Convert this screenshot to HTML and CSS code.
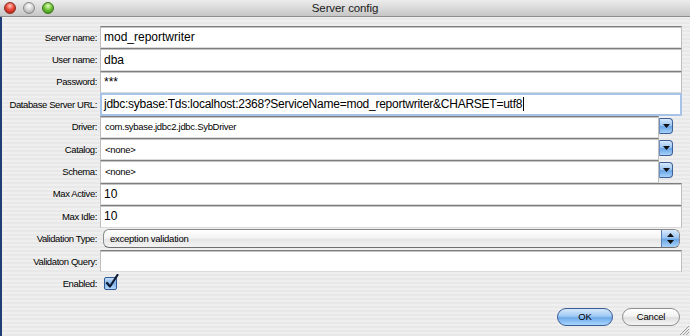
FILE: index.html
```html
<!DOCTYPE html>
<html>
<head>
<meta charset="utf-8">
<title>Server config</title>
<link rel="stylesheet" href="styles.css">
</head>
<body>
<div class="window">
  <div class="titlebar">
    <div class="lights">
      <span class="light red"></span>
      <span class="light gray"></span>
      <span class="light green"></span>
    </div>
    <div class="title">Server config</div>
    <div></div>
  </div>
  <div class="content">
    <div class="form">
      <div class="lbl">Server name:</div>
      <div class="field big">mod_reportwriter</div>

      <div class="lbl">User name:</div>
      <div class="field big">dba</div>

      <div class="lbl">Password:</div>
      <div class="field pw">***</div>

      <div class="lbl">Database Server URL:</div>
      <div class="field big focus">jdbc:sybase:Tds:localhost:2368?ServiceName=mod_reportwriter&amp;CHARSET=utf8<span class="caret"></span></div>

      <div class="lbl">Driver:</div>
      <div class="combo">
        <div class="combo-box">com.sybase.jdbc2.jdbc.SybDriver</div>
        <div class="combo-btn"><svg width="7" height="4" viewBox="0 0 7 4"><polygon points="0,0 7,0 3.5,4" fill="#111"/></svg></div>
      </div>

      <div class="lbl">Catalog:</div>
      <div class="combo">
        <div class="combo-box">&lt;none&gt;</div>
        <div class="combo-btn"><svg width="7" height="4" viewBox="0 0 7 4"><polygon points="0,0 7,0 3.5,4" fill="#111"/></svg></div>
      </div>

      <div class="lbl">Schema:</div>
      <div class="combo">
        <div class="combo-box">&lt;none&gt;</div>
        <div class="combo-btn"><svg width="7" height="4" viewBox="0 0 7 4"><polygon points="0,0 7,0 3.5,4" fill="#111"/></svg></div>
      </div>

      <div class="lbl">Max Active:</div>
      <div class="field big">10</div>

      <div class="lbl">Max Idle:</div>
      <div class="field big">10</div>

      <div class="lbl">Validation Type:</div>
      <div class="popup-cell">
        <div class="popup">
          <span class="popup-text">exception validation</span>
          <span class="popup-btn"><svg width="7" height="11" viewBox="0 0 7 11"><polygon points="3.5,0 7,4 0,4" fill="#111"/><polygon points="0,7 7,7 3.5,11" fill="#111"/></svg></span>
        </div>
      </div>

      <div class="lbl">Validaton Query:</div>
      <div class="field big"></div>

      <div class="lbl">Enabled:</div>
      <div class="check-cell">
        <svg class="check" width="16" height="16" viewBox="0 0 16 16">
          <defs>
            <linearGradient id="cb" x1="0" y1="0" x2="0" y2="1">
              <stop offset="0" stop-color="#cfe3f8"/>
              <stop offset="0.5" stop-color="#7fb1e8"/>
              <stop offset="1" stop-color="#b9dbfb"/>
            </linearGradient>
          </defs>
          <rect x="0.5" y="3.5" width="12" height="12" rx="1.5" fill="url(#cb)" stroke="#2f5a95"/>
          <path d="M3 9 L6 12.5 L13.5 1" fill="none" stroke="#0d1a33" stroke-width="2.2" stroke-linecap="round" stroke-linejoin="round"/>
        </svg>
      </div>
    </div>
    <div class="footer">
      <div class="btn ok">OK</div>
      <div class="btn cancel">Cancel</div>
    </div>
    <svg class="grip" width="11" height="11" viewBox="0 0 11 11">
      <path d="M10 1 L1 10 M10 4 L4 10 M10 7 L7 10" stroke="#9a9a9a" stroke-width="1"/>
    </svg>
  </div>
</div>
</body>
</html>
```
FILE: styles.css
```css
html, body {
  margin: 0;
  padding: 0;
  width: 690px;
  height: 336px;
  overflow: hidden;
  font-family: "Liberation Sans", Arial, sans-serif;
  color: #000;
}

.window {
  width: 690px;
  height: 336px;
  display: flex;
  flex-direction: column;
  background: repeating-linear-gradient(to bottom, #efefef 0 2px, #e8e8e8 2px 4px);
}

.titlebar {
  height: 16px;
  display: grid;
  grid-template-columns: 1fr auto 1fr;
  align-items: center;
  background: linear-gradient(to bottom, #ececec, #d6d6d6 60%, #c6c6c6);
  border-bottom: 1px solid #8c8c8c;
}

.lights {
  display: flex;
  gap: 7px;
  padding-left: 4px;
}

.light {
  width: 12px;
  height: 12px;
  border-radius: 50%;
  box-sizing: border-box;
}
.light.red {
  background: radial-gradient(circle at 50% 30%, #ffc6bd 0, #e8493a 45%, #a8180e 100%);
  border: 1px solid #8a2a20;
}
.light.gray {
  background: radial-gradient(circle at 50% 30%, #ffffff 0, #d5d5d5 45%, #9e9e9e 100%);
  border: 1px solid #8a8a8a;
}
.light.green {
  background: radial-gradient(circle at 50% 30%, #e4ffc0 0, #73c43a 45%, #2f7f12 100%);
  border: 1px solid #3d7420;
}

.title {
  font-size: 11.5px;
  line-height: 16px;
  color: #1a1a1a;
  letter-spacing: -0.1px;
}

.content {
  flex: 1;
  position: relative;
  border-left: 2px solid #203d78;
  padding-top: 9px;
}

.form {
  display: grid;
  grid-template-columns: 98px 582px;
  grid-auto-rows: 22.4px;
}

.lbl {
  font-size: 9.5px;
  letter-spacing: -0.4px;
  text-align: right;
  padding-right: 3px;
  display: flex;
  align-items: center;
  justify-content: flex-end;
  white-space: nowrap;
}

.field {
  box-sizing: border-box;
  background: #fff;
  border-top: 1px solid #7e7e7e;
  border-left: 1px solid #bdbdbd;
  border-right: 1px solid #bdbdbd;
  border-bottom: 1px solid #dadada;
  box-shadow: inset 0 1px 0 #c4c4c4;
  display: flex;
  align-items: center;
  padding-left: 3px;
  white-space: nowrap;
  overflow: hidden;
}

.field.big {
  font-size: 12px;
}

.field.pw {
  font-size: 12px;
  padding-left: 3px;
}

.field.focus {
  border: 2px solid #a8c3e8;
  box-shadow: none;
  padding-left: 2px;
  letter-spacing: -0.25px;
}

.caret {
  display: inline-block;
  width: 1px;
  height: 14px;
  background: #000;
  margin-left: 1px;
}

.combo {
  display: flex;
  align-items: flex-start;
}

.combo-box {
  box-sizing: border-box;
  width: 559px;
  height: 100%;
  background: #fff;
  border-top: 1px solid #7e7e7e;
  border-left: 1px solid #bdbdbd;
  border-right: 1px solid #bdbdbd;
  border-bottom: 1px solid #dadada;
  box-shadow: inset 0 1px 0 #c4c4c4;
  font-size: 9.5px;
  letter-spacing: -0.3px;
  display: flex;
  align-items: center;
  padding-left: 4px;
  white-space: nowrap;
}

.combo-btn {
  box-sizing: border-box;
  width: 14px;
  height: 16px;
  margin-top: 2px;
  border: 1px solid #3d5f96;
  border-left-color: #6a8cc0;
  border-radius: 0 4px 4px 0;
  background: linear-gradient(to bottom, #d8e9fb 0, #9cc6f2 45%, #6aa5e6 55%, #a8d2fa 100%);
  display: flex;
  align-items: center;
  justify-content: center;
}

.popup-cell {
  display: flex;
  align-items: center;
}

.popup {
  box-sizing: border-box;
  margin-left: 3px;
  width: 577px;
  height: 19px;
  border: 1px solid #8a8a8a;
  border-bottom-color: #6f6f6f;
  border-radius: 6px;
  background: linear-gradient(to bottom, #ffffff 0, #f4f4f4 45%, #e6e6e6 55%, #f2f2f2 100%);
  display: flex;
  align-items: center;
  overflow: hidden;
}

.popup-text {
  flex: 1;
  font-size: 9.5px;
  letter-spacing: -0.25px;
  padding-left: 6px;
}

.popup-btn {
  width: 17px;
  height: 100%;
  border-left: 1px solid #5c7fb4;
  background: linear-gradient(to bottom, #d8e9fb 0, #9cc6f2 45%, #6aa5e6 55%, #a8d2fa 100%);
  display: flex;
  align-items: center;
  justify-content: center;
}

.check-cell {
  display: flex;
  align-items: center;
  padding-left: 4px;
}

.check {
  display: block;
  margin-top: -3px;
}

.footer {
  display: flex;
  justify-content: flex-end;
  gap: 9px;
  padding-top: 13px;
  padding-right: 10px;
}

.btn {
  box-sizing: border-box;
  height: 18px;
  border-radius: 9px;
  font-size: 9.5px;
  letter-spacing: -0.2px;
  display: flex;
  align-items: center;
  justify-content: center;
}

.btn.ok {
  width: 56px;
  border: 1px solid #3a5c94;
  background: linear-gradient(to bottom, #d6e8fb 0, #9fcaf4 45%, #6ea9e9 55%, #a9d6ff 100%);
}

.btn.cancel {
  width: 58px;
  border: 1px solid #8e8e8e;
  background: linear-gradient(to bottom, #ffffff 0, #f2f2f2 45%, #dedede 55%, #f5f5f5 100%);
}

.grip {
  position: absolute;
  right: 0;
  bottom: 0;
}
```
